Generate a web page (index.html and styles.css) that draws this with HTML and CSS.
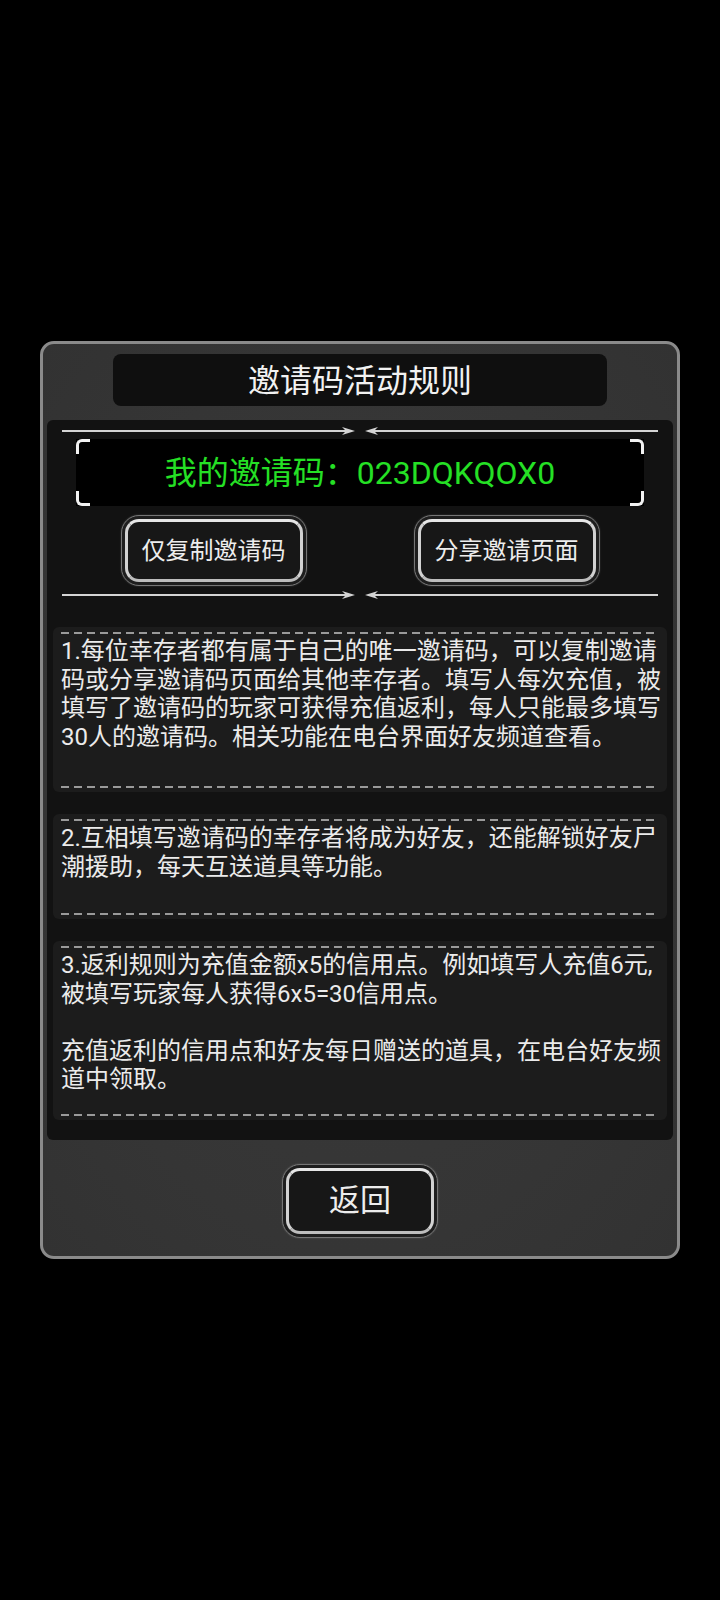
FILE: index.html
```html
<!DOCTYPE html>
<html lang="zh-CN">
<head>
<meta charset="utf-8">
<title>邀请码活动规则</title>
<link rel="stylesheet" href="styles.css">
</head>
<body>
<div class="screen">
  <div class="panel">
    <div class="title-bar"><span class="title">邀请码活动规则</span></div>
    <div class="content">
      <div class="divider">
        <svg width="596" height="10" viewBox="0 0 596 10">
          <line x1="0" y1="5" x2="284" y2="5" stroke="#d4d4d4" stroke-width="2"/>
          <polygon points="293,5 280,1 284,5 280,9" fill="#d4d4d4"/>
          <line x1="312" y1="5" x2="596" y2="5" stroke="#d4d4d4" stroke-width="2"/>
          <polygon points="303,5 316,1 312,5 316,9" fill="#d4d4d4"/>
        </svg>
      </div>
      <div class="code-box">
        <span class="corner corner-tl"></span>
        <span class="corner corner-tr"></span>
        <span class="corner corner-bl"></span>
        <span class="corner corner-br"></span>
        <span class="code-text">我的邀请码：023DQKQOX0</span>
      </div>
      <div class="btn-row">
        <div class="btn btn-wide"><div class="btn-face">仅复制邀请码</div></div>
        <div class="btn btn-wide"><div class="btn-face">分享邀请页面</div></div>
      </div>
      <div class="divider">
        <svg width="596" height="10" viewBox="0 0 596 10">
          <line x1="0" y1="5" x2="284" y2="5" stroke="#d4d4d4" stroke-width="2"/>
          <polygon points="293,5 280,1 284,5 280,9" fill="#d4d4d4"/>
          <line x1="312" y1="5" x2="596" y2="5" stroke="#d4d4d4" stroke-width="2"/>
          <polygon points="303,5 316,1 312,5 316,9" fill="#d4d4d4"/>
        </svg>
      </div>
      <div class="cards">
        <div class="card">
          <div class="dash"></div>
          <p class="card-text gap-35">1.每位幸存者都有属于自己的唯一邀请码，可以复制邀请码或分享邀请码页面给其他幸存者。填写人每次充值，被填写了邀请码的玩家可获得充值返利，每人只能最多填写30人的邀请码。相关功能在电台界面好友频道查看。</p>
          <div class="dash"></div>
        </div>
        <div class="card">
          <div class="dash"></div>
          <p class="card-text gap-32">2.互相填写邀请码的幸存者将成为好友，还能解锁好友尸潮援助，每天互送道具等功能。</p>
          <div class="dash"></div>
        </div>
        <div class="card">
          <div class="dash"></div>
          <p class="card-text gap-20">3.返利规则为充值金额x5的信用点。例如填写人充值6元,被填写玩家每人获得6x5=30信用点。<br><br>充值返利的信用点和好友每日赠送的道具，在电台好友频道中领取。</p>
          <div class="dash"></div>
        </div>
      </div>
    </div>
    <div class="footer">
      <div class="btn btn-back"><div class="btn-face btn-face-big">返回</div></div>
    </div>
  </div>
</div>
</body>
</html>
```

FILE: styles.css
```css
* { box-sizing: border-box; }

html, body {
  margin: 0;
  padding: 0;
  background: #000;
}

body {
  font-family: Roboto, "Noto Sans CJK SC", sans-serif;
  color: #ececec;
  text-autospace: no-autospace;
  text-spacing-trim: space-all;
}

.screen {
  width: 720px;
  height: 1600px;
  display: flex;
  align-items: center;
  justify-content: center;
}

.panel {
  width: 640px;
  border: 3px solid #8a8a8a;
  border-radius: 14px;
  background: radial-gradient(ellipse at 50% 50%, #3a3a3a 0%, #353535 70%, #323232 100%);
  padding: 10px 4px 18px;
  display: flex;
  flex-direction: column;
}

.title-bar {
  width: 494px;
  height: 52px;
  margin: 0 auto;
  background: #0f0f0f;
  border-radius: 8px;
  display: flex;
  align-items: center;
  justify-content: center;
}

.title {
  font-size: 32px;
  line-height: 1;
  color: #f2f2f2;
  padding-top: 1px;
}

.content {
  margin-top: 14px;
  background: #121212;
  border-radius: 6px;
  padding: 6px 6px 20px;
  display: flex;
  flex-direction: column;
  align-items: center;
}

.divider {
  width: 596px;
  height: 10px;
  display: flex;
}

.divider svg { display: block; }

.code-box {
  position: relative;
  margin-top: 3px;
  width: 568px;
  height: 67px;
  background: #000;
  display: flex;
  align-items: center;
  justify-content: center;
}

.code-text {
  font-size: 32px;
  line-height: 1;
  color: #25e025;
}

.corner {
  position: absolute;
  width: 14px;
  height: 15px;
  border: 0 solid #f2f2f2;
}

.corner-tl { top: 0; left: 0; border-top-width: 3px; border-left-width: 3px; border-top-left-radius: 6px; }
.corner-tr { top: 0; right: 0; border-top-width: 3px; border-right-width: 3px; border-top-right-radius: 6px; }
.corner-bl { bottom: 0; left: 0; border-bottom-width: 3px; border-left-width: 3px; border-bottom-left-radius: 6px; }
.corner-br { bottom: 0; right: 0; border-bottom-width: 3px; border-right-width: 3px; border-bottom-right-radius: 6px; }

.btn-row {
  margin-top: 9px;
  margin-bottom: 4px;
  display: flex;
  gap: 107px;
}

.btn {
  border: 1px solid #767676;
  border-radius: 18px;
  padding: 3px;
  background: #1e1e1e;
  box-shadow: 0 0 2px rgba(200, 200, 200, 0.25);
  display: flex;
}

.btn-wide {
  width: 186px;
  height: 71px;
}

.btn-back {
  width: 156px;
  height: 74px;
}

.btn-face {
  flex: 1;
  border: 3px solid #d6d6d6;
  border-color: #e6e6e6 #d2d2d2 #bdbdbd #d2d2d2;
  border-radius: 14px;
  background: #171717;
  display: flex;
  align-items: center;
  justify-content: center;
  font-size: 24px;
  line-height: 1;
  color: #ededed;
}

.btn-face-big {
  font-size: 31px;
}

.cards {
  margin-top: 27px;
  width: 614px;
  display: flex;
  flex-direction: column;
  gap: 22px;
}

.card {
  background: #1c1c1c;
  border-radius: 6px;
  padding: 5px 4px 4px 8px;
}

.dash {
  height: 2px;
  margin-right: 4px;
  background: repeating-linear-gradient(90deg, #9a9a9a 0 8px, transparent 8px 13px);
}

.card-text {
  margin: 3px 0 0;
  font-size: 24px;
  line-height: 28.5px;
  color: #ebebeb;
}

.gap-35 { padding-bottom: 35px; }
.gap-32 { padding-bottom: 32px; }
.gap-20 { padding-bottom: 20px; }

.footer {
  margin-top: 24px;
  display: flex;
  justify-content: center;
}
```
